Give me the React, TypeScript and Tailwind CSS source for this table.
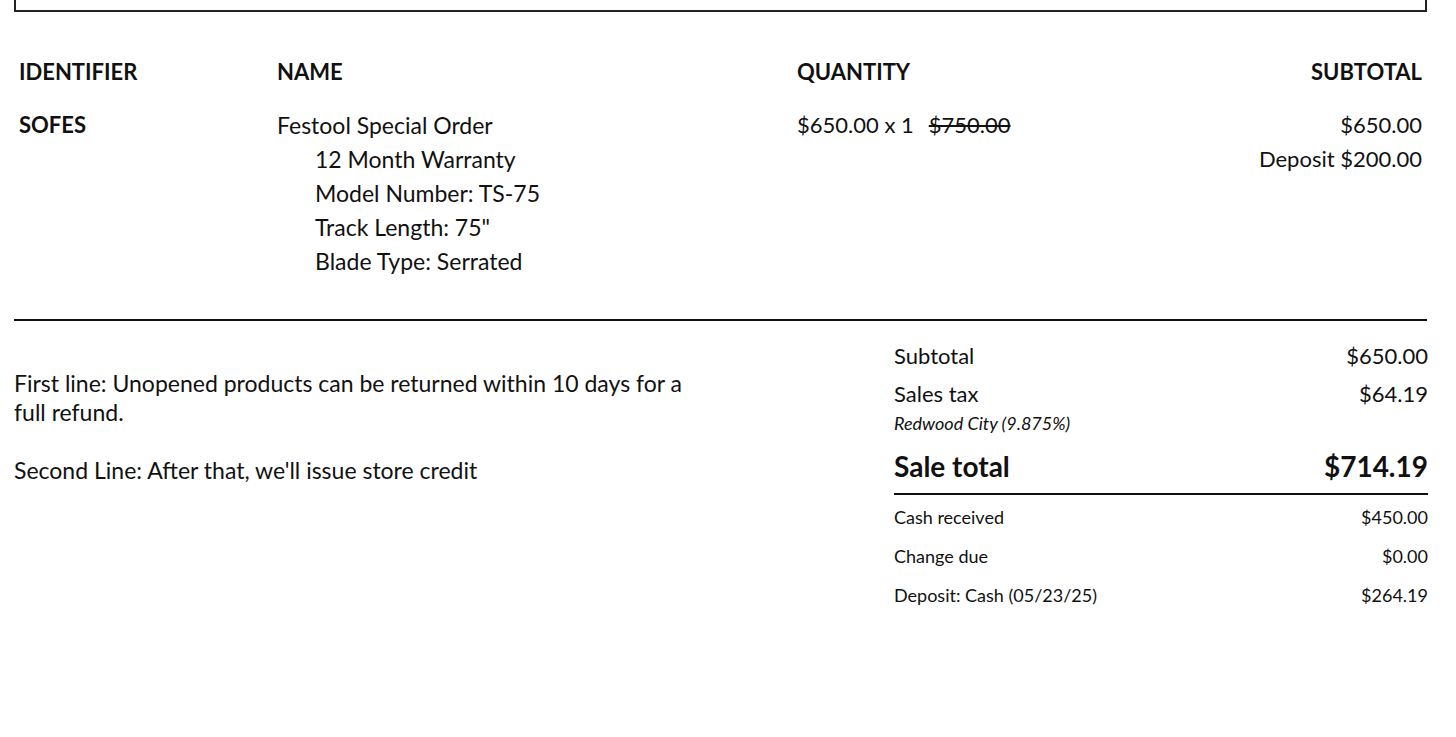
const font = { fontFamily: "Lato, 'Liberation Sans', sans-serif" };

const options = [
  "12 Month Warranty",
  "Model Number: TS-75",
  'Track Length: 75"',
  "Blade Type: Serrated",
];

const payments = [
  { label: "Cash received", amount: "$450.00" },
  { label: "Change due", amount: "$0.00" },
  { label: "Deposit: Cash (05/23/25)", amount: "$264.19" },
];

export default function App() {
  return (
    <div
      className="bg-white text-[#111] min-h-[737px] pl-[14px] pr-[29px]"
      style={font}
    >
      <div className="h-[12px] border-x-2 border-b-2 border-[#222]"></div>

      <table className="w-full mt-[43px] text-left border-collapse">
        <thead>
          <tr className="text-[22px] font-bold uppercase leading-[34px]">
            <th className="w-[258px] px-[5px] pb-[19px]">Identifier</th>
            <th className="w-[520px] px-[5px] pb-[19px]">Name</th>
            <th className="px-[5px] pb-[19px]">Quantity</th>
            <th className="px-[5px] pb-[19px] text-right">Subtotal</th>
          </tr>
        </thead>
        <tbody>
          <tr className="align-top text-[22px] leading-[34px]">
            <td className="px-[5px] font-bold">SOFES</td>
            <td className="px-[5px] text-[23px]">
              <p>Festool Special Order</p>
              {options.map((o) => (
                <p key={o} className="pl-[38px]">
                  {o}
                </p>
              ))}
            </td>
            <td className="px-[5px] whitespace-nowrap">
              <span>$650.00 x 1</span>
              <span className="ml-[15px] line-through">$750.00</span>
            </td>
            <td className="px-[5px] text-right">
              <p>$650.00</p>
              <p>Deposit $200.00</p>
            </td>
          </tr>
        </tbody>
      </table>

      <hr className="mt-[41px] border-t-2 border-[#111]" />

      <div className="flex justify-between mt-[20px]">
        <div className="w-[700px] pt-[28px] text-[23px] leading-[29px]">
          <p>
            First line: Unopened products can be returned within 10 days for a
            full refund.
          </p>
          <p className="mt-[29px]">
            Second Line: After that, we'll issue store credit
          </p>
        </div>

        <div className="w-[534px] -mr-[1px]">
          <div className="flex justify-between text-[22px] leading-[30px]">
            <span>Subtotal</span>
            <span>$650.00</span>
          </div>
          <div className="flex justify-between text-[22px] leading-[30px] mt-[8px]">
            <span>Sales tax</span>
            <span>$64.19</span>
          </div>
          <p className="italic text-[18px] leading-[22px] mt-[3px]">
            Redwood City (9.875%)
          </p>
          <div className="flex justify-between items-center text-[28px] font-bold leading-[36px] mt-[14px] pb-[9px] border-b-2 border-[#111]">
            <span>Sale total</span>
            <span>$714.19</span>
          </div>
          <div className="mt-[3px]">
            {payments.map((p) => (
              <div
                key={p.label}
                className="flex justify-between text-[18px] leading-[39px]"
              >
                <span>{p.label}</span>
                <span>{p.amount}</span>
              </div>
            ))}
          </div>
        </div>
      </div>
    </div>
  );
}
